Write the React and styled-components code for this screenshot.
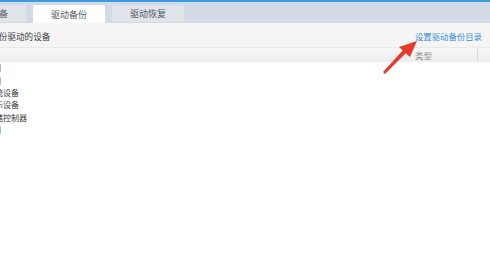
import React from "react";
import styled, { createGlobalStyle } from "styled-components";

const GlobalStyle = createGlobalStyle`
  html, body {
    margin: 0;
    padding: 0;
    background: #ffffff;
  }
  body {
    font-family: "Noto Sans CJK SC", "Noto Sans", sans-serif;
  }
`;

const Window = styled.div`
  position: relative;
  width: 490px;
  height: 260px;
  overflow: hidden;
  background: #ffffff;
  border-top: 2px solid #3d9be0;
  box-sizing: border-box;
`;

const TabBar = styled.div`
  height: 21px;
  background: #d1dae5;
  display: flex;
  align-items: flex-end;
  gap: 7px;
  margin-left: -46px;
`;

const Tab = styled.div`
  width: 72px;
  height: ${(p) => (p.$active ? "18px" : "17px")};
  margin-bottom: ${(p) => (p.$active ? "0" : "1px")};
  background: ${(p) => (p.$active ? "#ffffff" : "#dfe4eb")};
  border-radius: 2px 2px 0 0;
  display: flex;
  align-items: center;
  justify-content: center;
  font-size: 9px;
  color: #555b63;
`;

const Toolbar = styled.div`
  height: 24px;
  background: #f5f5f6;
  display: flex;
  justify-content: space-between;
  align-items: center;
  padding: 2px 8px 0 0;
  box-sizing: border-box;
  font-size: 8.6px;
`;

const Title = styled.span`
  margin-left: -27px;
  color: #3f3f3f;
  white-space: nowrap;
`;

const LinkText = styled.span`
  color: #3a8fd6;
  font-size: 8.4px;
  white-space: nowrap;
`;

const HeaderRow = styled.div`
  height: 15px;
  display: grid;
  grid-template-columns: 1fr 69px 13px;
  background: linear-gradient(#f7f7f7, #eeeeee);
  border-top: 1px solid #e9e9e9;
  box-sizing: border-box;
  font-size: 8.5px;
  line-height: 1;
  color: #8a8a8a;
`;

const HeaderCell = styled.div`
  display: flex;
  align-items: center;
  padding-left: ${(p) => p.$pad || 0}px;
  border-left: ${(p) => (p.$divider ? "1px solid #dcdcdc" : "none")};
`;

const List = styled.div`
  display: flex;
  flex-direction: column;
`;

const Row = styled.div`
  height: 12.4px;
  display: flex;
  align-items: center;
  font-size: 8px;
  line-height: 1;
  color: #3a3a3a;
  white-space: nowrap;
`;

const NodeIcon = styled.span`
  width: 9px;
  height: 8px;
  margin-left: -8px;
  border-radius: 1px;
  background: #9fb8d8;
  flex-shrink: 0;
`;

const Name = styled.span`
  margin-left: -13px;
`;

const Arrow = styled.svg`
  position: absolute;
  left: 380px;
  top: 36px;
`;

const rows = [
  { level: 0, name: "网卡" },
  { level: 0, name: "声卡" },
  { level: 1, name: "系统设备" },
  { level: 1, name: "显示设备" },
  { level: 1, name: "存储控制器" },
  { level: 0, name: "鼠标" },
];

const App = () => {
  return (
    <>
      <GlobalStyle />
      <Window>
        <TabBar>
          <Tab>硬件设备</Tab>
          <Tab $active>驱动备份</Tab>
          <Tab>驱动恢复</Tab>
        </TabBar>
        <Toolbar>
          <Title>需要备份驱动的设备</Title>
          <LinkText>设置驱动备份目录</LinkText>
        </Toolbar>
        <HeaderRow>
          <HeaderCell />
          <HeaderCell $pad={7}>类型</HeaderCell>
          <HeaderCell $divider />
        </HeaderRow>
        <List>
          {rows.map((r) => (
            <Row key={r.name} title={r.name}>
              {r.level === 0 ? <NodeIcon /> : <Name>{r.name}</Name>}
            </Row>
          ))}
        </List>
        <Arrow width="44" height="40" viewBox="0 0 44 40">
          <polygon points="3,34 5,36 27,14 24,11" fill="#e8392c" />
          <polygon points="37,3 19,9 30,19" fill="#e8392c" />
        </Arrow>
      </Window>
    </>
  );
};

export default App;
